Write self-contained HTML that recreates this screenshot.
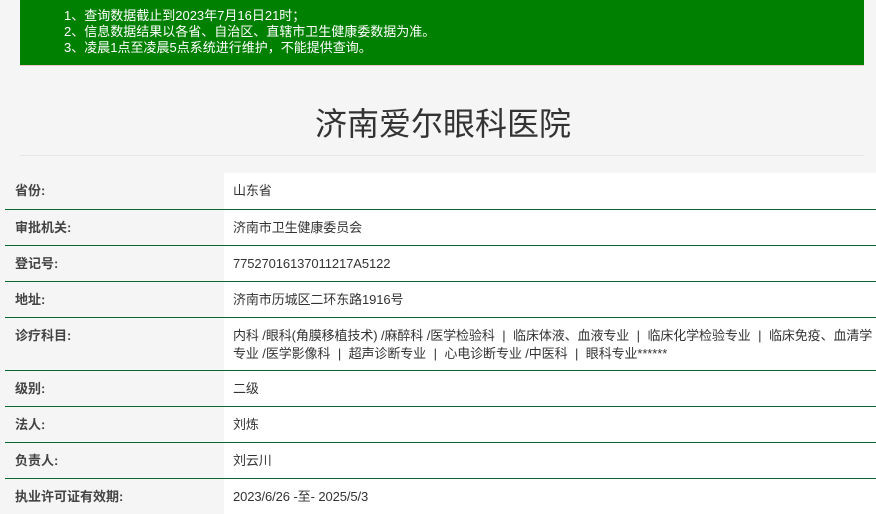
<!DOCTYPE html>
<html><head><meta charset="utf-8"><style>
*{margin:0;padding:0;box-sizing:border-box}
body{width:876px;height:512px;overflow:hidden;background:#f5f5f5;font-family:"Liberation Sans","Noto Sans CJK SC",sans-serif;color:#333}
.notice{position:absolute;left:20px;top:0;width:844px;height:66px;background:#008000;color:#fff;font-size:13px;line-height:16px;padding:8px 0 0 44px;border-bottom:1px solid #e8c8c8}
h1{position:absolute;left:0;width:886px;top:101px;text-align:center;font-weight:normal;font-size:32px;line-height:46px;color:#333}
.hr{position:absolute;left:20px;top:155px;width:844px;height:1px;background:#e6e6e6}
table{position:absolute;left:5px;top:173px;width:871px;border-collapse:collapse;font-size:13px}
td{border-bottom:1px solid #0a6633;vertical-align:top}
td.l{width:219px;padding-left:10px;padding-top:7px;font-weight:bold;color:#444;background:#f5f5f5}
td.v{background:#fff;padding-left:9px;padding-right:2px;color:#333;line-height:18px;padding-top:9px;letter-spacing:-0.1px}
.s{margin:0 4px}
tr{height:36px}
tr:last-child td{border-bottom:none}
</style></head><body>
<div class="notice">1、查询数据截止到2023年7月16日21时；<br>2、信息数据结果以各省、自治区、直辖市卫生健康委数据为准。<br>3、凌晨1点至凌晨5点系统进行维护，不能提供查询。</div>
<h1>济南爱尔眼科医院</h1>
<div class="hr"></div>
<table>
<tr><td class="l">省份:</td><td class="v">山东省</td></tr>
<tr><td class="l">审批机关:</td><td class="v">济南市卫生健康委员会</td></tr>
<tr><td class="l">登记号:</td><td class="v">77527016137011217A5122</td></tr>
<tr><td class="l">地址:</td><td class="v">济南市历城区二环东路1916号</td></tr>
<tr style="height:53px"><td class="l">诊疗科目:</td><td class="v">内科 /眼科(角膜移植技术) /麻醉科 /医学检验科 <span class="s">|</span> 临床体液、血液专业 <span class="s">|</span> 临床化学检验专业 <span class="s">|</span> 临床免疫、血清学专业 /医学影像科 <span class="s">|</span> 超声诊断专业 <span class="s">|</span> 心电诊断专业 /中医科 <span class="s">|</span> 眼科专业******</td></tr>
<tr><td class="l">级别:</td><td class="v">二级</td></tr>
<tr><td class="l">法人:</td><td class="v">刘炼</td></tr>
<tr><td class="l">负责人:</td><td class="v">刘云川</td></tr>
<tr><td class="l">执业许可证有效期:</td><td class="v">2023/6/26 -至- 2025/5/3</td></tr>
</table>
</body></html>
